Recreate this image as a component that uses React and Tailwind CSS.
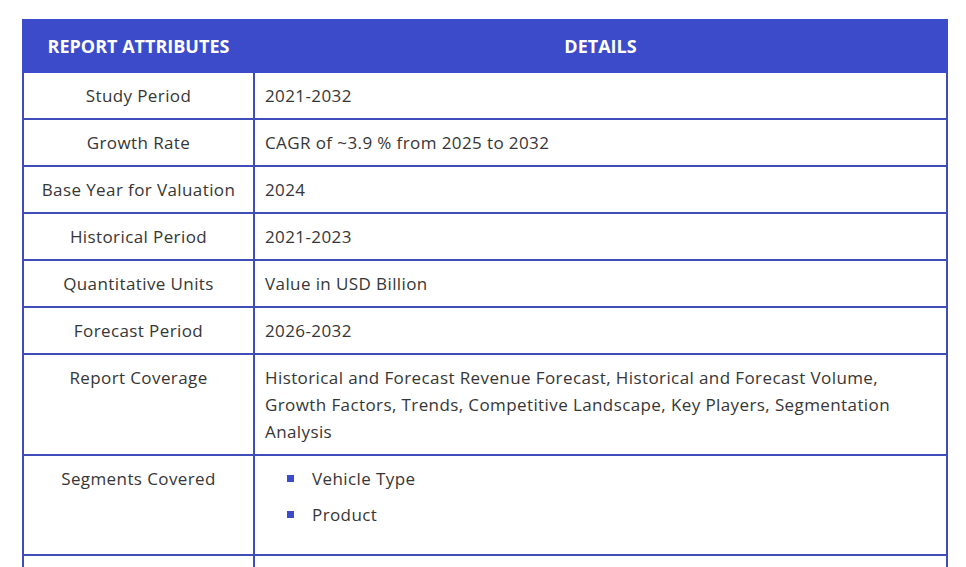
import React from "react";

const rows = [
  { label: "Study Period", value: "2021-2032" },
  { label: "Growth Rate", value: "CAGR of ~3.9 % from 2025 to 2032" },
  { label: "Base Year for Valuation", value: "2024" },
  { label: "Historical Period", value: "2021-2023" },
  { label: "Quantitative Units", value: "Value in USD Billion" },
  { label: "Forecast Period", value: "2026-2032" },
  {
    label: "Report Coverage",
    value:
      "Historical and Forecast Revenue Forecast, Historical and Forecast Volume, Growth Factors, Trends, Competitive Landscape, Key Players, Segmentation Analysis",
  },
  { label: "Segments Covered", list: ["Vehicle Type", "Product"] },
  // next row starts right at the fold, nothing of it is visible yet
  { label: "", value: "" },
];

export default function App() {
  return (
    <div className="min-h-screen bg-white pt-[19px] pl-[22px] font-['Open_Sans','Lato',sans-serif] text-[17px] tracking-[0.4px] text-[#363636]">
      <table className="w-[926px] border-collapse">
        <thead>
          <tr className="bg-[#3c4bca] text-white text-[18px]">
            <th className="w-[231px] h-[52px] border-2 border-[#3c4bca] font-bold uppercase tracking-[0px] text-center">
              Report Attributes
            </th>
            <th className="border-2 border-[#3c4bca] font-bold uppercase tracking-[0px] text-center">
              Details
            </th>
          </tr>
        </thead>
        <tbody>
          {rows.map((row, i) => (
            <tr key={i}>
              <td className="border-2 border-[#3f4db8] align-top text-center px-[10px] py-[9px] h-[47px] leading-[27px]">
                {row.label}
              </td>
              <td className="border-2 border-[#3f4db8] align-top text-left px-[10px] py-[9px] leading-[27px]">
                {row.list ? (
                  <ul className="pl-[22px] mb-[17px] flex flex-col gap-[9px]">
                    {row.list.map(item => (
                      <li key={item} className="flex items-center gap-[18px]">
                        <span className="inline-block w-[7px] h-[7px] bg-[#3c4bca]" />
                        {item}
                      </li>
                    ))}
                  </ul>
                ) : (
                  row.value
                )}
              </td>
            </tr>
          ))}
        </tbody>
      </table>
    </div>
  );
}
